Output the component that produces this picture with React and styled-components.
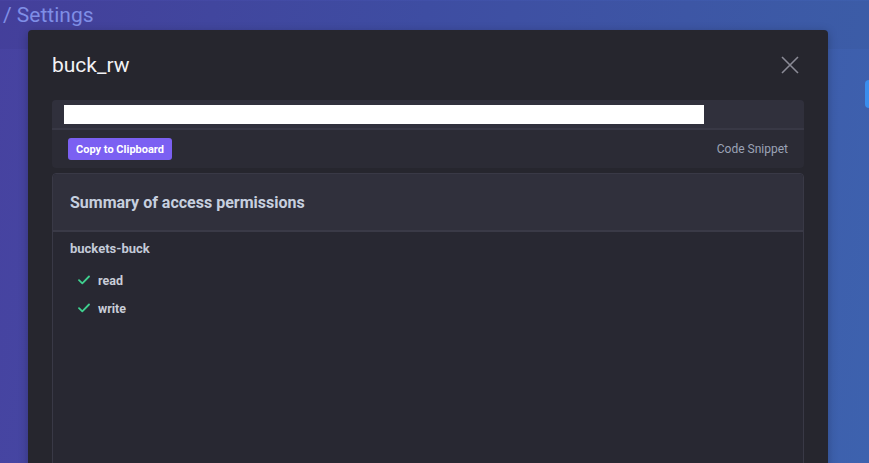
import React from 'react';
import styled, {createGlobalStyle} from 'styled-components';

const GlobalStyle = createGlobalStyle`
  html, body {
    margin: 0;
    padding: 0;
    height: 100%;
    overflow: hidden;
  }
  body {
    font-family: Roboto, "Liberation Sans", sans-serif;
    background: linear-gradient(100deg, #4742a0 0%, #4150a8 45%, #3d62ae 100%);
  }
`;

const Page = styled.div`
  position: relative;
  height: 463px;
  overflow: hidden;
`;

const Header = styled.div`
  height: 48px;
  background: rgba(0, 0, 0, 0.03);
  padding-left: 3px;
  box-sizing: border-box;
`;

const Crumb = styled.div`
  font-size: 21px;
  line-height: 28px;
  margin-top: 1px;
  color: #7f8ee6;
`;

const SideButton = styled.div`
  position: absolute;
  left: 865px;
  top: 80px;
  width: 20px;
  height: 28px;
  border-radius: 4px;
  background: #3a8ded;
`;

const Modal = styled.div`
  position: absolute;
  left: 28px;
  top: 30px;
  width: 800px;
  height: 460px;
  background: #26262e;
  border-radius: 4px;
  padding: 24px;
  box-sizing: border-box;
  box-shadow: 0 2px 10px rgba(0, 0, 0, 0.25);
`;

const TitleRow = styled.div`
  display: flex;
  align-items: center;
  justify-content: space-between;
  height: 22px;
  margin-bottom: 24px;
`;

const Title = styled.h2`
  margin: 0;
  font-size: 21px;
  font-weight: 400;
  color: #f2f2f5;
  line-height: 22px;
`;

const CloseButton = styled.button`
  background: none;
  border: none;
  padding: 0;
  margin-right: 4px;
  width: 20px;
  height: 20px;
  display: flex;
  align-items: center;
  justify-content: center;
  cursor: pointer;
`;

const CodeBox = styled.div`
  border-radius: 4px;
  overflow: hidden;
  background: #2b2b35;
  margin-bottom: 5px;
`;

const CodeArea = styled.div`
  height: 30px;
  background: #30303c;
  padding: 5px 12px 0;
  box-sizing: border-box;
  border-bottom: 2px solid #383845;
`;

const CodeValue = styled.div`
  width: 640px;
  height: 19px;
  background: #ffffff;
`;

const CodeFooter = styled.div`
  display: flex;
  align-items: center;
  justify-content: space-between;
  height: 38px;
  padding: 0 16px;
`;

const CopyButton = styled.button`
  background: #7b60f2;
  color: #ffffff;
  border: none;
  border-radius: 3px;
  height: 22px;
  width: 104px;
  padding: 0;
  font-family: Roboto, "Liberation Sans", sans-serif;
  font-size: 11px;
  font-weight: 700;
  cursor: pointer;
`;

const SnippetLabel = styled.span`
  font-size: 12px;
  color: #9ba3b6;
`;

const Card = styled.div`
  border: 1px solid #393946;
  border-radius: 4px;
  background: #282832;
  height: 300px;
`;

const CardHeader = styled.div`
  height: 56px;
  display: flex;
  align-items: center;
  padding: 0 17px;
  background: #30303c;
  border-bottom: 2px solid #3a3a47;
  border-radius: 4px 4px 0 0;
  font-size: 16px;
  font-weight: 700;
  color: #c6cfdf;
`;

const CardBody = styled.div`
  padding: 9px 17px;
`;

const BucketName = styled.div`
  font-size: 13px;
  font-weight: 700;
  color: #c3cad8;
  line-height: 16px;
  margin-bottom: 9px;
`;

const Permission = styled.div`
  display: flex;
  align-items: center;
  gap: 8px;
  height: 28px;
  padding-left: 8px;
  font-size: 12.5px;
  font-weight: 700;
  color: #c9cdd8;
`;

function Check() {
    return (
        <svg width="12" height="10" viewBox="0 0 12 10" fill="none">
            <path d="M1 5.2L4.3 8.3L11 1.5" stroke="#3fd08f" strokeWidth="1.8" strokeLinecap="round" strokeLinejoin="round"/>
        </svg>
    );
}

function App() {
    const permissions = ['read', 'write'];

    return (
        <Page>
            <GlobalStyle/>
            <Header>
                <Crumb>/ Settings</Crumb>
            </Header>
            <SideButton/>
            <Modal>
                <TitleRow>
                    <Title>buck_rw</Title>
                    <CloseButton aria-label="Close">
                        <svg width="18" height="18" viewBox="0 0 18 18">
                            <path d="M1 1L17 17M17 1L1 17" stroke="#8b8b96" strokeWidth="1.6"/>
                        </svg>
                    </CloseButton>
                </TitleRow>
                <CodeBox>
                    <CodeArea>
                        <CodeValue/>
                    </CodeArea>
                    <CodeFooter>
                        <CopyButton>Copy to Clipboard</CopyButton>
                        <SnippetLabel>Code Snippet</SnippetLabel>
                    </CodeFooter>
                </CodeBox>
                <Card>
                    <CardHeader>Summary of access permissions</CardHeader>
                    <CardBody>
                        <BucketName>buckets-buck</BucketName>
                        {permissions.map(p => (
                            <Permission key={p}>
                                <Check/>
                                <span>{p}</span>
                            </Permission>
                        ))}
                    </CardBody>
                </Card>
            </Modal>
        </Page>
    );
}

export default App;
